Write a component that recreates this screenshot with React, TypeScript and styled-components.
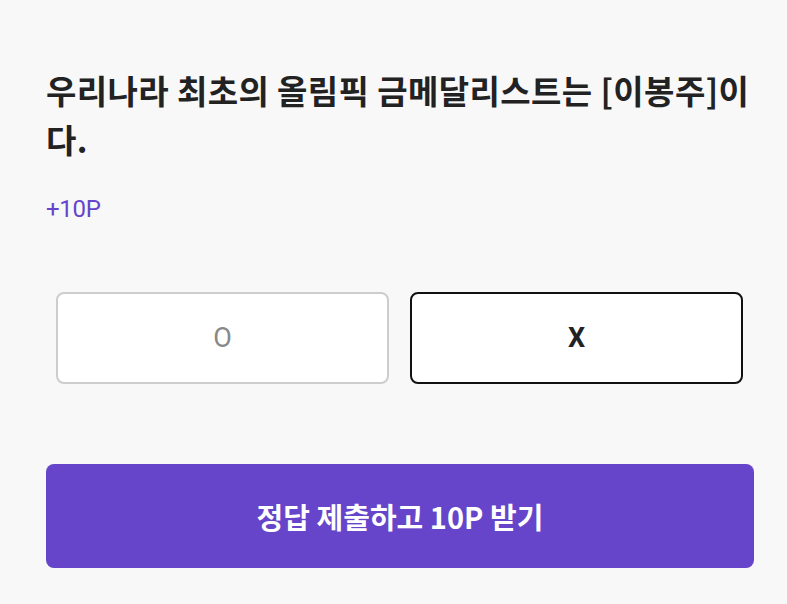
import React from "react";
import styled, { createGlobalStyle } from "styled-components";

const GlobalStyle = createGlobalStyle`
  html, body {
    margin: 0;
    padding: 0;
    background: #f8f8f8;
  }
  body {
    font-family: "Noto Sans CJK KR", "Noto Sans", sans-serif;
  }
`;

const Page = styled.div`
  display: flex;
  flex-direction: column;
  padding: 66px 33px 0 46px;
  min-height: 604px;
  box-sizing: border-box;
`;

const Question = styled.h1`
  margin: 0;
  font-size: 33px;
  line-height: 49px;
  font-weight: 700;
  letter-spacing: 0.4px;
  color: #222;
`;

const Point = styled.div`
  margin-top: 30px;
  font-family: Roboto, "Noto Sans", sans-serif;
  font-size: 24px;
  line-height: 30px;
  color: #6645cb;
  letter-spacing: -0.3px;
`;

const Options = styled.div`
  display: grid;
  grid-template-columns: 1fr 1fr;
  gap: 21px;
  padding: 0 11px 0 10px;
  margin-top: 68px;
`;

const Option = styled.button<{ $selected?: boolean }>`
  height: 92px;
  border-radius: 8px;
  background: #fff;
  border: 2px solid ${(p) => (p.$selected ? "#111" : "#cdcdcd")};
  color: ${(p) => (p.$selected ? "#222" : "#888")};
  font-family: Roboto, "Noto Sans", sans-serif;
  font-size: 27px;
  font-weight: ${(p) => (p.$selected ? 700 : 400)};
  cursor: pointer;
`;

const Submit = styled.button`
  margin-top: 80px;
  height: 104px;
  border: none;
  border-radius: 8px;
  background: #6645cb;
  color: #fff;
  font-family: "Noto Sans CJK KR", "Noto Sans", sans-serif;
  font-size: 29px;
  font-weight: 700;
  letter-spacing: 0;
  cursor: pointer;
`;

export default function App() {
  return (
    <>
      <GlobalStyle />
      <Page>
        <Question>우리나라 최초의 올림픽 금메달리스트는 [이봉주]이다.</Question>
        <Point>+10P</Point>
        <Options>
          <Option>O</Option>
          <Option $selected>X</Option>
        </Options>
        <Submit>정답 제출하고 10P 받기</Submit>
      </Page>
    </>
  );
}
